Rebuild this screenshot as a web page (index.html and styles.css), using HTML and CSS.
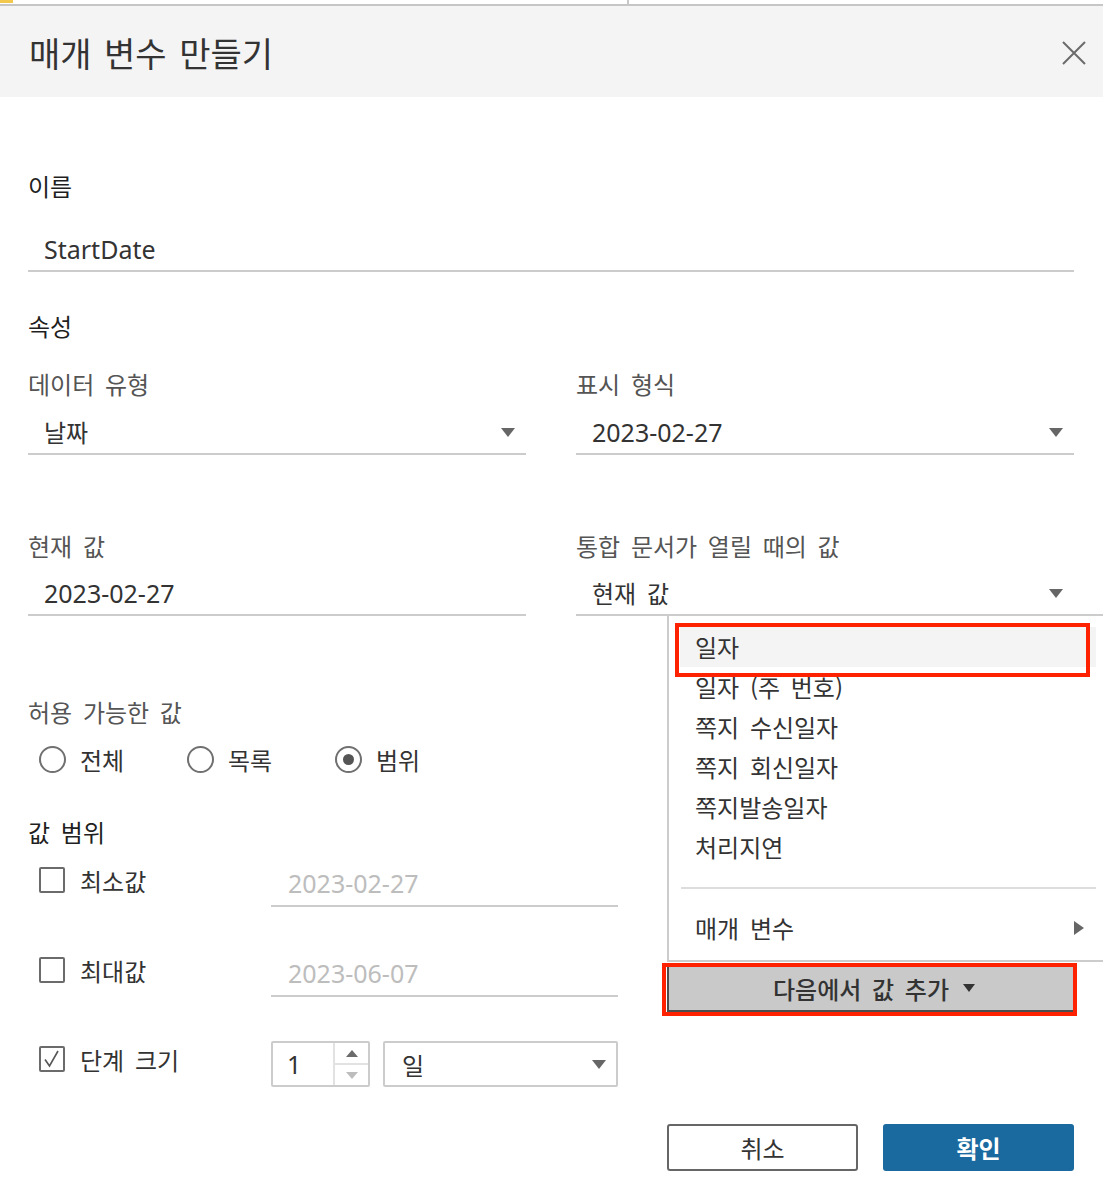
FILE: index.html
```html
<!DOCTYPE html>
<html lang="ko">
<head>
<meta charset="utf-8">
<title>매개 변수 만들기</title>
<link rel="stylesheet" href="styles.css">
</head>
<body>
<div class="dialog">
  <div class="topstrip"><div class="tab-yellow"></div><div class="tab-left"></div></div>
  <div class="topline"></div>
  <div class="header">
    <div class="title">매개 변수 만들기</div>
    <svg class="close" width="24" height="24" viewBox="0 0 24 24"><path d="M1 1 L23 23 M23 1 L1 23" stroke="#6b6b6b" stroke-width="2" fill="none"/></svg>
  </div>

  <div class="content">
    <div class="section-label l-name">이름</div>
    <div class="text-input name-input"><span class="latin">StartDate</span></div>

    <div class="section-label l-props">속성</div>

    <div class="grid2 row-a">
      <div class="field">
        <div class="field-label">데이터 유형</div>
        <div class="text-input select-line"><span>날짜</span><span class="tri"></span></div>
      </div>
      <div class="field">
        <div class="field-label">표시 형식</div>
        <div class="text-input select-line"><span class="latin">2023-02-27</span><span class="tri"></span></div>
      </div>
    </div>

    <div class="grid2 row-b">
      <div class="field">
        <div class="field-label">현재 값</div>
        <div class="text-input select-line"><span class="latin">2023-02-27</span></div>
      </div>
      <div class="field">
        <div class="field-label">통합 문서가 열릴 때의 값</div>
        <div class="text-input select-line"><span>현재 값</span><span class="tri"></span></div>
      </div>
    </div>

    <div class="field-label l-allowed">허용 가능한 값</div>
    <div class="radio-row">
      <div class="radio-item"><span class="radio"></span><span>전체</span></div>
      <div class="radio-item"><span class="radio"></span><span>목록</span></div>
      <div class="radio-item"><span class="radio checked"></span><span>범위</span></div>
    </div>

    <div class="section-label l-range">값 범위</div>

    <div class="range-row r1">
      <div class="range-left"><span class="checkbox"></span><span>최소값</span></div>
      <div class="range-input"><span class="latin placeholder">2023-02-27</span></div>
    </div>
    <div class="range-row r2">
      <div class="range-left"><span class="checkbox"></span><span>최대값</span></div>
      <div class="range-input"><span class="latin placeholder">2023-06-07</span></div>
    </div>
    <div class="range-row r3">
      <div class="range-left"><span class="checkbox"><svg width="22" height="22" viewBox="0 0 22 22"><path d="M4 11.5 L8.5 18 L17 3" stroke="#555" stroke-width="1.6" fill="none"/></svg></span><span>단계 크기</span></div>
      <div class="num-box">
        <div class="num-val"><span class="latin">1</span></div>
        <div class="spin">
          <div class="spin-up"><span class="tri-up"></span></div>
          <div class="spin-down"><span class="tri-down"></span></div>
        </div>
      </div>
      <div class="unit-select"><span>일</span><span class="tri"></span></div>
    </div>

    <div class="actions">
      <div class="btn btn-cancel">취소</div>
      <div class="btn btn-ok">확인</div>
    </div>
  </div>

  <div class="menu">
    <div class="menu-item hover">일자</div>
    <div class="menu-item">일자 (주 번호)</div>
    <div class="menu-item">쪽지 수신일자</div>
    <div class="menu-item">쪽지 회신일자</div>
    <div class="menu-item">쪽지발송일자</div>
    <div class="menu-item">처리지연</div>
    <div class="menu-sep"></div>
    <div class="menu-item sub"><span>매개 변수</span><span class="tri-right"></span></div>
  </div>
  <div class="add-btn"><span>다음에서 값 추가</span><span class="tri small"></span></div>

  <div class="mark mark-item"></div>
  <div class="mark mark-btn"></div>
</div>
</body>
</html>
```

FILE: styles.css
```css
* { box-sizing: border-box; }

body {
  margin: 0;
  background: #ffffff;
  font-family: "Noto Sans", "Noto Sans CJK KR", sans-serif;
  font-size: 24px;
  word-spacing: 4px;
  color: #333333;
}

.dialog {
  position: relative;
  width: 1103px;
  height: 1204px;
  overflow: hidden;
  background: #ffffff;
}

.topstrip {
  display: flex;
  height: 4px;
}
.tab-yellow {
  width: 13px;
  height: 3px;
  background: #f2c94c;
}
.tab-left {
  width: 616px;
  height: 4px;
  border-right: 2px solid #c8c8c8;
}
.topline {
  height: 2px;
  background: #c6c6c6;
}

.header {
  height: 91px;
  background: #f4f4f4;
  display: flex;
  align-items: center;
  justify-content: space-between;
  padding: 2px 17px 0 29px;
}
.title {
  font-size: 34px;
  line-height: 40px;
  word-spacing: 3px;
  color: #333333;
  font-family: "Noto Sans CJK KR", sans-serif;
}
.close { display: block; }

.content {
  padding: 0 29px 0 28px;
}

.section-label {
  font-size: 24px;
  line-height: 30px;
  color: #1f1f1f;
  font-family: "Noto Sans CJK KR", sans-serif;
}
.field-label {
  font-size: 24px;
  line-height: 30px;
  color: #555555;
  font-family: "Noto Sans CJK KR", sans-serif;
}

.latin {
  font-family: "Noto Sans", sans-serif;
  font-size: 25px;
  word-spacing: 0;
}

.l-name { margin-top: 74px; }
.text-input {
  height: 44px;
  line-height: 42px;
  border-bottom: 2px solid #cccccc;
  padding-left: 16px;
  color: #333333;
  font-family: "Noto Sans CJK KR", sans-serif;
}
.name-input { margin-top: 27px; }
.l-props { margin-top: 39px; }

.grid2 {
  display: grid;
  grid-template-columns: 498px 498px;
  column-gap: 50px;
}
.row-a { margin-top: 28px; }
.row-b { margin-top: 76px; }
.field .text-input { margin-top: 12px; }
.row-b .field .text-input { margin-top: 11px; }

.select-line {
  display: flex;
  align-items: center;
  justify-content: space-between;
  padding-right: 11px;
}

.tri {
  width: 0;
  height: 0;
  border-left: 7px solid transparent;
  border-right: 7px solid transparent;
  border-top: 9px solid #666666;
}

.l-allowed { margin-top: 81px; }

.radio-row {
  display: flex;
  margin-top: 17px;
  height: 30px;
  padding-left: 11px;
}
.radio-item {
  width: 148px;
  display: flex;
  align-items: center;
  gap: 14px;
  font-family: "Noto Sans CJK KR", sans-serif;
}
.radio {
  width: 27px;
  height: 27px;
  border: 2px solid #707070;
  border-radius: 50%;
  display: flex;
  align-items: center;
  justify-content: center;
  flex: none;
}
.radio.checked::after {
  content: "";
  width: 11px;
  height: 11px;
  border-radius: 50%;
  background: #555555;
}

.l-range { margin-top: 43px; }

.range-row {
  display: flex;
  align-items: flex-start;
}
.r1 { margin-top: 15px; }
.r2 { margin-top: 45px; }
.r3 { margin-top: 44px; }

.range-left {
  width: 243px;
  height: 36px;
  display: flex;
  align-items: center;
  gap: 15px;
  padding-left: 11px;
  font-family: "Noto Sans CJK KR", sans-serif;
}
.checkbox {
  width: 26px;
  height: 26px;
  border: 2px solid #6b6b6b;
  border-radius: 2px;
  flex: none;
  display: flex;
  align-items: center;
  justify-content: center;
}
.checkbox svg { display: block; }

.range-input {
  width: 347px;
  height: 45px;
  line-height: 43px;
  border-bottom: 2px solid #cccccc;
  padding-left: 17px;
}
.placeholder { color: #bdbdbd; }

.num-box {
  width: 99px;
  height: 46px;
  border: 2px solid #cccccc;
  border-radius: 2px;
  display: flex;
}
.num-val {
  width: 62px;
  line-height: 42px;
  padding-left: 14px;
  border-right: 2px solid #e2e2e2;
}
.spin {
  flex: 1;
  display: flex;
  flex-direction: column;
}
.spin-up, .spin-down {
  flex: 1;
  display: flex;
  align-items: center;
  justify-content: center;
}
.spin-up { border-bottom: 2px solid #e2e2e2; }
.tri-up {
  width: 0; height: 0;
  border-left: 6px solid transparent;
  border-right: 6px solid transparent;
  border-bottom: 7px solid #6b6b6b;
}
.tri-down {
  width: 0; height: 0;
  border-left: 6px solid transparent;
  border-right: 6px solid transparent;
  border-top: 7px solid #bdbdbd;
}

.unit-select {
  width: 235px;
  height: 46px;
  margin-left: 13px;
  border: 2px solid #cccccc;
  border-radius: 2px;
  display: flex;
  align-items: center;
  justify-content: space-between;
  padding: 0 10px 0 17px;
  font-family: "Noto Sans CJK KR", sans-serif;
}

.actions {
  display: flex;
  justify-content: flex-end;
  gap: 25px;
  margin-top: 37px;
}
.btn {
  width: 191px;
  height: 47px;
  display: flex;
  align-items: center;
  justify-content: center;
  border-radius: 3px;
  font-family: "Noto Sans CJK KR", sans-serif;
  font-size: 24px;
}
.btn-cancel {
  border: 2px solid #666666;
  color: #333333;
  background: #ffffff;
}
.btn-ok {
  background: #1b6a9f;
  color: #ffffff;
  font-weight: 700;
}

/* dropdown menu overlay */
.menu {
  position: absolute;
  left: 667px;
  top: 614px;
  width: 446px;
  border: 2px solid #cccccc;
  background: #ffffff;
  padding: 11px 15px 12px 11px;
  font-family: "Noto Sans CJK KR", sans-serif;
}
.menu-item {
  height: 40px;
  line-height: 40px;
  padding-left: 15px;
  color: #333333;
}
.menu-item.hover { background: #f4f4f4; }
.menu-sep {
  height: 2px;
  background: #dddddd;
  margin: 20px 0 19px 1px;
}
.menu-item.sub {
  display: flex;
  align-items: center;
  justify-content: space-between;
  padding-right: 12px;
}
.tri-right {
  width: 0; height: 0;
  border-top: 7px solid transparent;
  border-bottom: 7px solid transparent;
  border-left: 10px solid #666666;
}

.add-btn {
  position: absolute;
  left: 667px;
  top: 966px;
  width: 406px;
  height: 46px;
  background: #c9c9c9;
  border-left: 2px solid #4d4d4d;
  border-bottom: 2px solid #4d4d4d;
  display: flex;
  align-items: center;
  justify-content: center;
  gap: 14px;
  font-family: "Noto Sans CJK KR", sans-serif;
  font-size: 24px;
  font-weight: 500;
  color: #333333;
  padding-left: 6px;
}
.tri.small {
  border-left-width: 6px;
  border-right-width: 6px;
  border-top-width: 8px;
  border-top-color: #333333;
}

.mark {
  position: absolute;
  border: 4px solid #fe2200;
}
.mark-item {
  left: 675px;
  top: 623px;
  width: 415px;
  height: 54px;
}
.mark-btn {
  left: 662px;
  top: 963px;
  width: 415px;
  height: 53px;
}
```
